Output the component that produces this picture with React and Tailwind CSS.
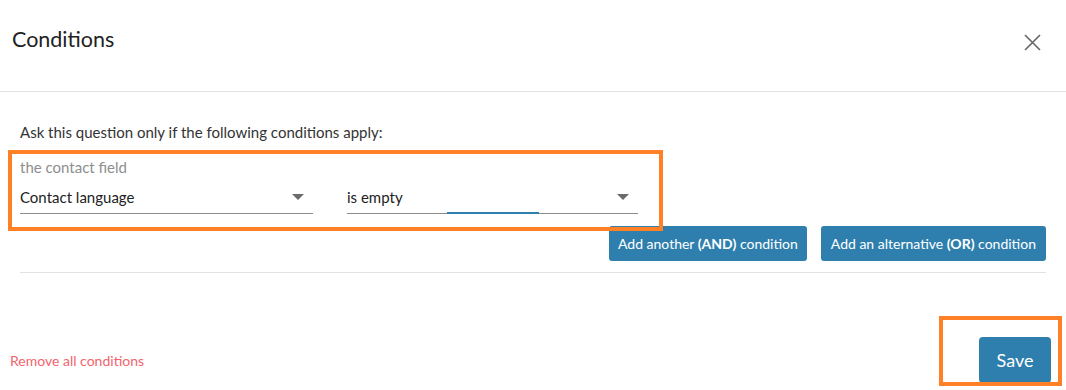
import React from 'react';

const Caret = () => (
  <svg width="12" height="7" viewBox="0 0 12 7" className="shrink-0">
    <path d="M0 0 L12 0 L6 6 Z" fill="#6b6b6b" />
  </svg>
);

const Select = ({ value, focused, className }) => (
  <div className={`relative flex items-end justify-between h-[37px] pb-[6px] border-b border-[#8c8c8c] ${className}`}>
    <span className="text-[15px] leading-5 text-[#222]">{value}</span>
    <span className="mr-[9px] mb-[6px]"><Caret /></span>
    {focused && <div className="absolute left-[100px] bottom-[-1px] w-[92px] h-[2px] bg-[#2f7fae]" />}
  </div>
);

export default function App() {
  return (
    <div className="relative w-[1066px] h-[390px] bg-white overflow-hidden" style={{ fontFamily: 'Lato, "Open Sans", sans-serif' }}>
      {/* Header */}
      <div className="flex items-start justify-between h-[92px] border-b border-[#e2e2e2] pl-3 pr-[25px]">
        <h1 className="mt-[24px] text-[21.5px] leading-[30px] text-[#222] font-normal">Conditions</h1>
        <button className="mt-[34px] text-[#666]">
          <svg width="17" height="17" viewBox="0 0 17 17">
            <path d="M1 1 L16 16 M16 1 L1 16" stroke="#666" strokeWidth="1.6" />
          </svg>
        </button>
      </div>

      {/* Body */}
      <div className="px-5">
        <p className="pt-[30px] text-[15px] leading-5 text-[#333]">Ask this question only if the following conditions apply:</p>
        <p className="mt-[15px] text-[15px] leading-5 text-[#8e8e8e]">the contact field</p>
        <div className="flex gap-[34px]">
          <Select value="Contact language" className="w-[293px]" />
          <Select value="is empty" focused className="w-[291px]" />
        </div>
        <div className="flex justify-end gap-[14px] mt-3">
          <button className="h-[35px] px-[9px] rounded-[3px] bg-[#2f7fae] text-white text-[14px]">
            Add another <b>(AND)</b> condition
          </button>
          <button className="h-[35px] px-[10px] rounded-[3px] bg-[#2f7fae] text-white text-[14px]">
            Add an alternative <b>(OR)</b> condition
          </button>
        </div>
        <div className="mt-[11px] border-b border-[#e2e2e2]" />
      </div>

      {/* Footer */}
      <div className="flex items-center justify-between pl-[10px] pr-[15px] mt-[64px]">
        <a className="text-[14px] text-[#f2646c]">Remove all conditions</a>
        <button className="h-[46px] w-[72px] rounded-[4px] bg-[#2f7fae] text-white text-[18px]">Save</button>
      </div>

      {/* Annotation highlights */}
      <div className="absolute left-[8px] top-[150px] w-[655px] h-[81px] border-4 border-[#ff8025] pointer-events-none" />
      <div className="absolute left-[939px] top-[316px] w-[123px] h-[70px] border-4 border-[#ff8025] pointer-events-none" />
    </div>
  );
}
